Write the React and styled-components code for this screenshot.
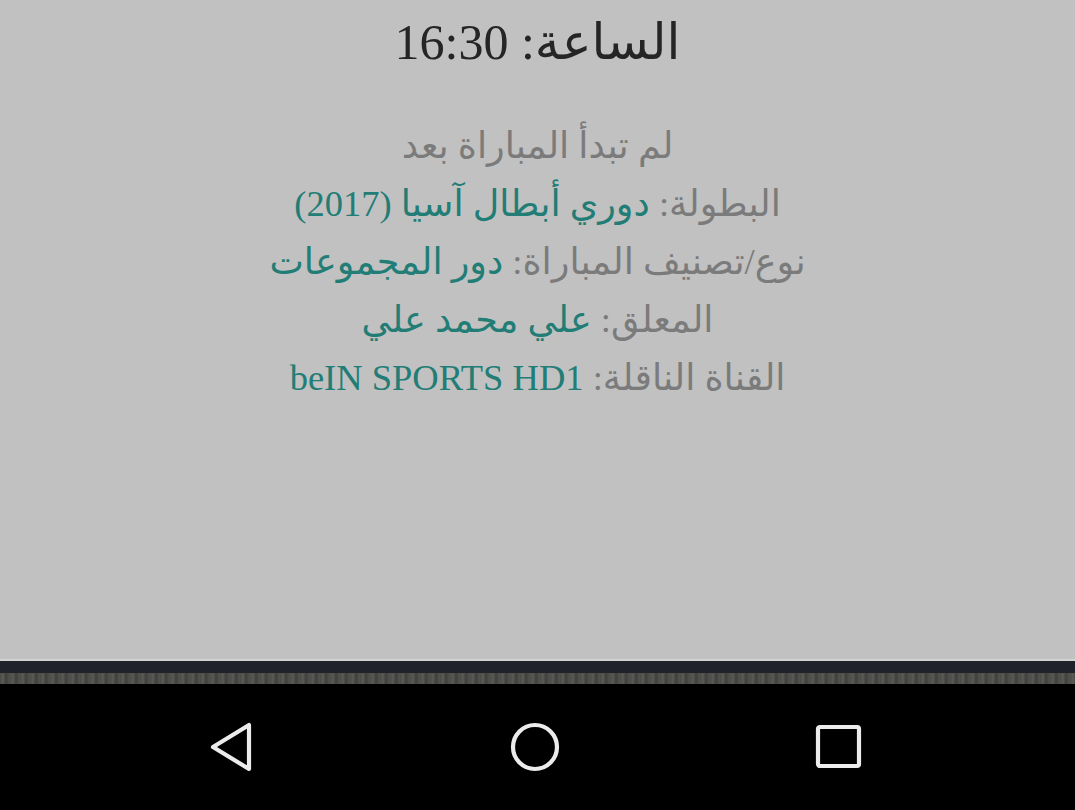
import React from "react";
import styled, { createGlobalStyle } from "styled-components";

const Global = createGlobalStyle`
  html, body { margin: 0; padding: 0; background: #000; }
  body { font-family: "Liberation Serif", "DejaVu Sans", serif; }
`;

const Screen = styled.div`
  width: 1075px;
  height: 810px;
  display: flex;
  flex-direction: column;
  overflow: hidden;
`;

const Content = styled.main`
  height: 661px;
  background: #c1c1c1;
  direction: rtl;
  text-align: center;
  display: flex;
  flex-direction: column;
  align-items: center;
  border-bottom: 2px solid #cfd3cf;
  box-sizing: border-box;
`;

const Title = styled.h1`
  margin: 12px 0 0;
  font-weight: normal;
  font-size: 50px;
  line-height: 60px;
  color: #252525;
  font-family: "Liberation Serif", "DejaVu Sans", serif;
`;

const Info = styled.div`
  margin-top: 45px;
  display: flex;
  flex-direction: column;
  align-items: center;
`;

const Row = styled.div`
  font-size: 36.5px;
  line-height: 58px;
  color: #7b7b7b;
  white-space: nowrap;
`;

const Value = styled.span`
  color: #217d75;
`;

const DarkStrip = styled.div`
  height: 12px;
  background: #1f212b;
`;

const TextureStrip = styled.div`
  height: 11px;
  background: repeating-linear-gradient(
    90deg,
    #4b4c47 0px,
    #5a5b55 3px,
    #3f403c 6px,
    #545550 10px
  );
`;

const NavBar = styled.nav`
  flex: 1;
  background: #000;
  display: flex;
  align-items: center;
  justify-content: center;
  gap: 254px;
  padding-right: 5px;
`;

const NavIcon = styled.svg`
  width: 50px;
  height: 50px;
  display: block;
`;

const stroke = {
  fill: "none",
  stroke: "#ececec",
  strokeWidth: 4.2,
  strokeLinejoin: "round",
  strokeLinecap: "round",
};

export default function App() {
  return (
    <Screen>
      <Global />
      <Content>
        <Title>الساعة: 16:30</Title>
        <Info>
          <Row>لم تبدأ المباراة بعد</Row>
          <Row>
            البطولة: <Value>دوري أبطال آسيا (2017)</Value>
          </Row>
          <Row>
            نوع/تصنيف المباراة: <Value>دور المجموعات</Value>
          </Row>
          <Row>
            المعلق: <Value>علي محمد علي</Value>
          </Row>
          <Row>
            القناة الناقلة: <Value>beIN SPORTS HD1</Value>
          </Row>
        </Info>
      </Content>
      <DarkStrip />
      <TextureStrip />
      <NavBar>
        <NavIcon viewBox="0 0 50 50" aria-label="back">
          <path d="M7 25 L43 3 L43 47 Z" {...stroke} />
        </NavIcon>
        <NavIcon viewBox="0 0 50 50" aria-label="home">
          <circle cx="25" cy="25" r="22" {...stroke} />
        </NavIcon>
        <NavIcon viewBox="0 0 50 50" aria-label="recent">
          <rect x="4" y="5" width="41" height="39" rx="2" {...stroke} />
        </NavIcon>
      </NavBar>
    </Screen>
  );
}
